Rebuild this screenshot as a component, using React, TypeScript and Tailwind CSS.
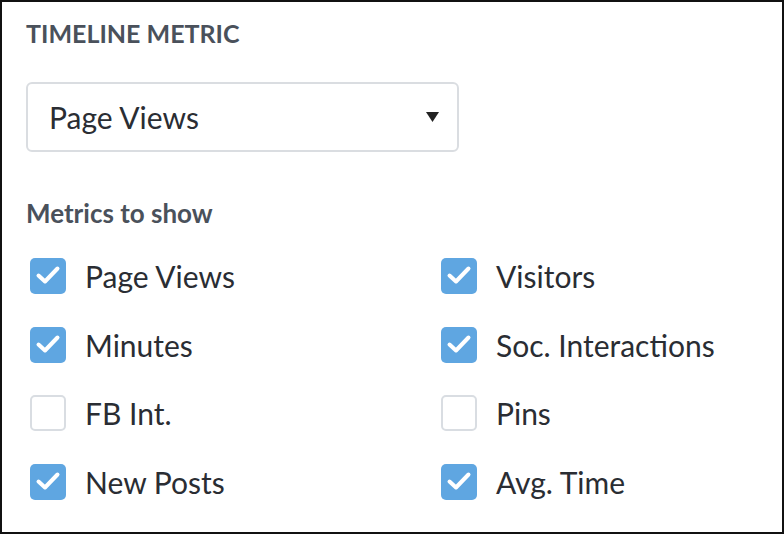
import React from 'react';

const metrics = [
  { label: 'Page Views', checked: true },
  { label: 'Visitors', checked: true },
  { label: 'Minutes', checked: true },
  { label: 'Soc. Interactions', checked: true },
  { label: 'FB Int.', checked: false },
  { label: 'Pins', checked: false },
  { label: 'New Posts', checked: true },
  { label: 'Avg. Time', checked: true },
];

function Checkbox({ checked }: { checked: boolean }) {
  if (!checked) {
    return <div className="w-9 h-9 shrink-0 rounded-[5px] border-2 border-[#d9dde2] bg-white" />;
  }
  return (
    <div className="w-9 h-9 shrink-0 rounded-[5px] bg-[#5fa6e1] flex items-center justify-center">
      <svg width="36" height="36" viewBox="0 0 36 36" fill="none">
        <path d="M8.5 17.5 L15 23.5 L27.5 10.5" stroke="white" strokeWidth="4" strokeLinecap="round" strokeLinejoin="round" />
      </svg>
    </div>
  );
}

export default function App() {
  return (
    <div
      className="w-[784px] h-[534px] border-2 border-[#111] bg-white pl-6 pt-4 overflow-hidden"
      style={{ fontFamily: 'Lato, "Open Sans", sans-serif' }}
    >
      <h2 className="text-[25px] leading-[1.2] font-bold text-[#4a515b]">TIMELINE METRIC</h2>
      <div className="mt-[34px] w-[433px] h-[70px] rounded-[6px] border-2 border-[#dadde1] flex items-center justify-between pl-[21px] pr-[18px]">
        <span className="text-[30px] leading-none text-[#2a2d33]">Page Views</span>
        <svg width="13" height="10" viewBox="0 0 13 10">
          <path d="M0 0 H13 L6.5 10 Z" fill="#222" />
        </svg>
      </div>
      <div className="mt-[46px] text-[26px] leading-[1.2] font-bold text-[#4a515b]">Metrics to show</div>
      <div className="mt-[29px] ml-1 grid grid-cols-[411px_1fr] gap-y-[32.5px]">
        {metrics.map((m) => (
          <div key={m.label} className="flex items-center h-9">
            <Checkbox checked={m.checked} />
            <span className="ml-[19px] text-[30px] leading-none text-[#2a2d33] whitespace-nowrap">{m.label}</span>
          </div>
        ))}
      </div>
    </div>
  );
}
